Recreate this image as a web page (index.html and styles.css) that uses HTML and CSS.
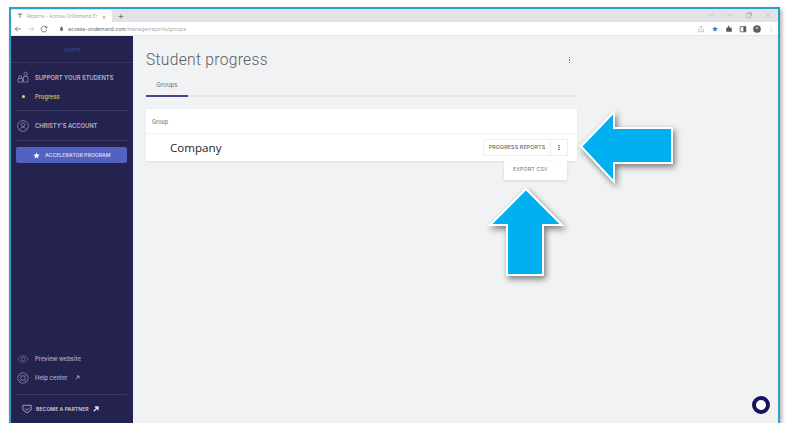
FILE: index.html
```html
<!DOCTYPE html>
<html lang="en">
<head>
<meta charset="utf-8">
<title>Student progress</title>
<link rel="stylesheet" href="styles.css">
</head>
<body>
<div class="window">
  <header class="tabstrip">
    <div class="tab">
      <svg class="favicon" viewBox="0 0 8 8"><path d="M1 1.500h6M4 1.500v5" stroke="#666" stroke-width="1.200" fill="none"/></svg>
      <span class="tab-title">Reports - Access OnDemand Er</span>
      <span class="tab-close">×</span>
    </div>
    <span class="tab-new">+</span>
    <div class="win-controls">
      <svg viewBox="0 0 8 8"><path d="M1.500 3l2.500 2.500L6.500 3" stroke="#c4c6cb" fill="none"/></svg>
      <svg viewBox="0 0 8 8"><path d="M1 4h6" stroke="#c4c6cb" fill="none"/></svg>
      <svg viewBox="0 0 8 8"><path d="M1.500 2.500h4v4h-4zM3 1.500h3.500v3.500" stroke="#b8bbc0" fill="none"/></svg>
      <svg viewBox="0 0 8 8"><path d="M1.500 1.500l5 5M6.500 1.500l-5 5" stroke="#c4c6cb" fill="none"/></svg>
    </div>
  </header>
  <div class="toolbar">
    <svg class="nav-icon" viewBox="0 0 10 10"><path d="M9 5H1.500M4.500 2L1.500 5l3 3" stroke="#666" fill="none"/></svg>
    <svg class="nav-icon" viewBox="0 0 10 10"><path d="M1 5h7.500M5.500 2l3 3-3 3" stroke="#c2c4c8" fill="none"/></svg>
    <svg class="nav-icon" viewBox="0 0 10 10"><path d="M8.300 3.500A3.600 3.600 0 1 0 8.600 6M8.600 1.300v2.500H6.100" stroke="#666" fill="none"/></svg>
    <svg class="lock" viewBox="0 0 8 8"><path d="M2 3.500h4v3.500H2zM3 3.500V2a1 1 0 0 1 2 0v1.500" fill="#666" stroke="#666" stroke-width=".6"/></svg>
    <span class="url">access-ondemand.com<span class="url-path">/manage/reports/groups</span></span>
    <div class="tool-icons">
      <svg viewBox="0 0 10 10"><path d="M2 4.500v4h6v-4M5 6.500V1.500M3.200 3L5 1.500 6.800 3" stroke="#b6b8bc" fill="none"/></svg>
      <svg viewBox="0 0 10 10"><path d="M5 1.500l1.100 2.300 2.400.3-1.800 1.600.5 2.400L5 6.900 2.800 8.100l.5-2.400-1.800-1.600 2.400-.3z" fill="#2f74d8"/></svg>
      <svg viewBox="0 0 10 10"><path d="M1.500 3.500h2V2a1 1 0 0 1 2 0v1.500h3v5h-7z" fill="#55575b"/></svg>
      <svg viewBox="0 0 10 10"><path d="M1.500 2h7v6.500h-7z" fill="none" stroke="#55575b"/><path d="M5.500 2h3v6.500h-3z" fill="#55575b"/></svg>
      <svg viewBox="0 0 10 10"><circle cx="5" cy="5" r="4.800" fill="#59605f"/><circle cx="5" cy="3.800" r="1.700" fill="#a3a9a8"/></svg>
      <svg viewBox="0 0 10 10"><path d="M5 2v.8M5 4.600v.8M5 7.200V8" stroke="#8a8a8a"/></svg>
    </div>
  </div>

  <div class="app">
    <nav class="sidebar">
      <div class="home">Home</div>
      <div class="nav-group">
        <div class="nav-head">
          <svg class="side-icon" viewBox="0 0 12 12"><path d="M1 11V7.500h4.500V11zM6.500 11V5.500H11V11zM3.200 7.500a1.500 1.500 0 1 0 0-3 1.500 1.500 0 0 0 0 3zM8.700 4.500a1.700 1.700 0 1 0 0-3.400 1.700 1.700 0 0 0 0 3.400z" fill="none" stroke="#8d8bab" stroke-width=".8"/></svg>
          <span>SUPPORT YOUR STUDENTS</span>
        </div>
        <div class="nav-sub"><i class="dot"></i><span>Progress</span></div>
      </div>
      <div class="nav-head nav-account">
        <svg class="side-icon" viewBox="0 0 12 12"><circle cx="6" cy="6" r="5.400" fill="none" stroke="#8d8bab" stroke-width=".8"/><circle cx="6" cy="4.700" r="1.800" fill="none" stroke="#8d8bab" stroke-width=".8"/><path d="M2.700 10c.6-2 1.700-2.800 3.300-2.800S8.700 8 9.300 10" fill="none" stroke="#8d8bab" stroke-width=".8"/></svg>
        <span>CHRISTY'S ACCOUNT</span>
      </div>
      <div class="cta">
        <svg viewBox="0 0 10 10"><path d="M5 .7l1.300 2.900 3.100.3-2.300 2.100.7 3.100L5 7.500 2.200 9.100l.7-3.100L.6 3.900l3.100-.3z" fill="#fff"/></svg>
        <span>ACCELERATOR PROGRAM</span>
      </div>
      <div class="spacer"></div>
      <div class="nav-link">
        <svg class="side-icon" viewBox="0 0 12 12"><path d="M.8 6C2.200 3.800 4 2.800 6 2.800s3.800 1 5.200 3.200C9.800 8.200 8 9.200 6 9.200S2.200 8.200.8 6z" fill="none" stroke="#6d6b90" stroke-width=".8"/><circle cx="6" cy="6" r="1.800" fill="none" stroke="#6d6b90" stroke-width=".8"/></svg>
        <span>Preview website</span>
      </div>
      <div class="nav-link">
        <svg class="side-icon" viewBox="0 0 12 12"><circle cx="6" cy="6" r="5.200" fill="none" stroke="#8d8bab" stroke-width=".8"/><circle cx="6" cy="6" r="2.300" fill="none" stroke="#8d8bab" stroke-width=".8"/><path d="M2.400 2.400l2 2M9.600 2.400l-2 2M2.400 9.600l2-2M9.600 9.600l-2-2" stroke="#8d8bab" stroke-width=".8"/></svg>
        <span>Help center</span>
        <svg class="ext" viewBox="0 0 6 6"><path d="M1 5l3.500-3.500M2 1.200h2.800V4" stroke="#c6c5d8" stroke-width=".9" fill="none"/></svg>
      </div>
      <div class="partner">
        <svg class="partner-icon" viewBox="0 0 12 12"><path d="M1 1.500h10v5.500L6 10.800 1 7z" fill="none" stroke="#c6c5d8" stroke-width=".9"/><path d="M3.500 5.500L6 7.500l3-3" stroke="#c6c5d8" stroke-width=".9" fill="none"/></svg>
        <span>BECOME A PARTNER</span>
        <svg class="ext ext-large" viewBox="0 0 6 6"><path d="M.8 5.200l3.800-3.800M1.800 1h3.200v3.200" stroke="#e4e3ee" stroke-width="1.300" fill="none"/></svg>
      </div>
    </nav>

    <main class="content">
      <div class="title-row">
        <h1>Student progress</h1>
        <span class="kebab"><i></i><i></i><i></i></span>
      </div>
      <div class="tabs"><span class="tabs-active">Groups</span></div>
      <section class="card">
        <div class="card-head">Group</div>
        <div class="card-row">
          <span class="company">Company</span>
          <div class="split">
            <span class="split-main">PROGRESS REPORTS</span>
            <span class="split-more"><span class="kebab"><i></i><i></i><i></i></span></span>
          </div>
          <div class="menu">EXPORT CSV</div>
        </div>
      </section>
    </main>
  </div>
</div>

<!-- Callout arrows drawn over the page -->
<svg class="callout callout-left" viewBox="0 0 95 76">
  <path d="M2 37.500L35 3v16h58v35H35v19z" fill="#00b0f0" stroke="#fff" stroke-width="2"/>
</svg>
<svg class="callout callout-up" viewBox="0 0 76 90">
  <path d="M38 2l36 36H55v50H19V38H2z" fill="#00b0f0" stroke="#fff" stroke-width="2"/>
</svg>
<div class="chat"></div>
</body>
</html>
```
FILE: styles.css
```css
* { box-sizing: border-box; }

html, body { margin: 0; height: 100%; }

body {
  background: #fff;
  overflow: hidden;
  padding: 7px 0 0 9px;
  font-family: Inter, "Liberation Sans", sans-serif;
  position: relative;
}

.window {
  width: 771px;
  height: 416px;
  border: solid #2f9ec8;
  border-width: 2px 2px 0 2px;
  background: #f1f2f4;
  box-shadow: 2px 2px 4px rgba(0, 0, 0, .3);
  display: flex;
  flex-direction: column;
  overflow: hidden;
}

/* Browser chrome */
.tabstrip {
  height: 13px;
  flex: none;
  background: #e1e3e7;
  display: flex;
  align-items: flex-end;
}

.tab {
  width: 101px;
  height: 12px;
  background: #fff;
  border-radius: 3px 3px 0 0;
  display: flex;
  align-items: center;
  padding: 0 6px;
  color: #a0a2a6;
  font-size: 4.700px;
}

.favicon { width: 6px; height: 6px; margin-right: 4px; flex: none; }
.tab-title { white-space: nowrap; }
.tab-close { font-size: 6px; color: #888; margin-left: auto; }
.tab-new { width: 14px; margin-left: 2px; text-align: center; font-size: 9px; line-height: 12px; color: #666; }

.win-controls {
  margin-left: auto;
  display: flex;
  gap: 11px;
  padding: 0 6px 3px 0;
}
.win-controls svg { width: 8px; height: 8px; }

.toolbar {
  height: 14px;
  flex: none;
  background: #fff;
  border-bottom: 1px solid #e3e4e7;
  display: flex;
  align-items: center;
  padding-left: 3px;
  gap: 5px;
}
.nav-icon { width: 8px; height: 8px; }
.lock { width: 5px; height: 5px; margin-left: 6px; }
.url { font-size: 5.200px; color: #6a6c70; margin-left: -1px; white-space: nowrap; }
.url-path { color: #aaacb0; }

.tool-icons {
  margin-left: auto;
  display: flex;
  gap: 6px;
  padding-right: 3px;
}
.tool-icons svg { width: 8px; height: 8px; }

.app { flex: 1; display: flex; min-height: 0; }

/* Left navigation */
.sidebar {
  width: 122px;
  flex: none;
  background: #24224f;
  display: flex;
  flex-direction: column;
  color: #c6c5d8;
}

.home {
  height: 27px;
  text-align: center;
  font-size: 6px;
  line-height: 28px;
  color: #3e4a9c;
  border-bottom: 1px solid #35335f;
  flex: none;
}

.nav-group {
  margin: 0 5px;
  padding: 7px 0 8px;
  border-bottom: 1px solid #3a3865;
}

.nav-head {
  display: flex;
  align-items: center;
  gap: 6px;
  font-size: 5.800px;
  font-weight: 600;
  color: #b4b3ca;
  height: 13px;
  white-space: nowrap;
}

.nav-group .nav-head { padding-left: 1px; height: 14px; }

.side-icon { width: 12px; height: 12px; flex: none; }

.nav-sub {
  display: flex;
  align-items: center;
  margin-top: 6px;
  height: 12px;
  padding-left: 6px;
  font-size: 5.800px;
  font-weight: 500;
  color: #e0c260;
}

.dot {
  width: 3px;
  height: 3px;
  border-radius: 50%;
  background: #f1d878;
  margin-right: 10px;
}

.nav-account {
  margin: 0 5px;
  padding: 0 1px;
  height: 30px;
  border-bottom: 1px solid #3a3865;
}

.cta {
  margin: 6px 6px 0 5px;
  height: 16px;
  background: #5361c0;
  border-radius: 2px;
  display: flex;
  align-items: center;
  padding-left: 17px;
  gap: 5px;
  color: #d8daf0;
  font-size: 5.200px;
  font-weight: 600;
  white-space: nowrap;
  flex: none;
}
.cta svg { width: 7px; height: 7px; }

.spacer { flex: 1; }

.nav-link {
  margin: 0 6px;
  height: 19px;
  display: flex;
  align-items: center;
  gap: 6px;
  font-size: 5.900px;
  font-weight: 500;
  color: #b0afc8;
  flex: none;
}

.ext { width: 5px; height: 5px; margin-left: 1px; }
.ext-large { width: 6px; height: 6px; margin-left: 0; }

.partner {
  margin: 7px 6px 0 5px;
  height: 29px;
  padding-left: 6px;
  border-top: 1px solid #3a3865;
  display: flex;
  align-items: center;
  gap: 4px;
  font-size: 5.200px;
  font-weight: 600;
  color: #cfcede;
  white-space: nowrap;
  flex: none;
}
.partner-icon { width: 10px; height: 10px; }

/* Main content */
.content { flex: 1; padding: 12px 0 0 13px; min-width: 0; }

.title-row {
  width: 431px;
  height: 24px;
  display: flex;
  align-items: center;
  justify-content: space-between;
  padding-right: 7px;
}

h1 {
  margin: 0;
  font-family: Roboto, "Liberation Sans", sans-serif;
  font-size: 15.600px;
  font-weight: 300;
  color: #5a5c62;
  letter-spacing: .3px;
}

.kebab { display: inline-flex; flex-direction: column; gap: 1px; align-items: center; }
.kebab i { width: 1.200px; height: 1.200px; background: #77797e; display: block; }

.tabs {
  width: 431px;
  height: 24px;
  margin-top: 1px;
  border-bottom: 2px solid #e6e7ea;
}

.tabs-active {
  display: block;
  width: 42px;
  height: 24px;
  padding-top: 8px;
  text-align: center;
  font-size: 6.200px;
  font-weight: 400;
  color: #6a6c78;
  border-bottom: 2px solid #45448a;
}

.card {
  width: 431px;
  height: 52px;
  margin-top: 12px;
  background: #fff;
  box-shadow: 0 1px 2px rgba(0, 0, 0, .08);
}

.card-head {
  height: 25px;
  padding: 0 6px;
  font-size: 5.500px;
  font-weight: 500;
  line-height: 27px;
  color: #808288;
  border-bottom: 1px solid #f3f3f5;
}

.card-row {
  height: 27px;
  position: relative;
  display: flex;
  align-items: center;
  padding: 0 9px 0 24px;
}

.company {
  font-family: "Open Sans", sans-serif;
  font-size: 11.600px;
  color: #1d1d1f;
}

.split {
  margin-left: auto;
  display: flex;
  height: 17px;
  border: 1px solid #edeef0;
  border-radius: 1px;
}

.split-main {
  width: 67px;
  text-align: center;
  font-size: 5.300px;
  font-weight: 500;
  letter-spacing: .15px;
  line-height: 15px;
  color: #66686f;
  border-right: 1px solid #edeef0;
}

.split-more { width: 16px; display: flex; align-items: center; justify-content: center; }

/* Dropdown opened from the split button */
.menu {
  position: absolute;
  top: 27px;
  left: 358px;
  width: 63px;
  height: 19px;
  padding-left: 9px;
  background: #fff;
  box-shadow: 0 1px 3px rgba(0, 0, 0, .12);
  font-size: 5.200px;
  font-weight: 400;
  letter-spacing: .2px;
  line-height: 16px;
  color: #707278;
}

/* Items placed over the page */
.callout {
  position: absolute;
  overflow: visible;
  filter: drop-shadow(2px 3px 3px rgba(0, 0, 0, .5));
}
.callout-left { left: 579px; top: 109px; width: 95px; height: 76px; }
.callout-up { left: 488px; top: 187px; width: 76px; height: 90px; }

.chat {
  position: absolute;
  left: 752px;
  top: 396px;
  width: 18px;
  height: 18px;
  border: 4px solid #16145e;
  border-radius: 50%;
  background: #fff;
}
```
